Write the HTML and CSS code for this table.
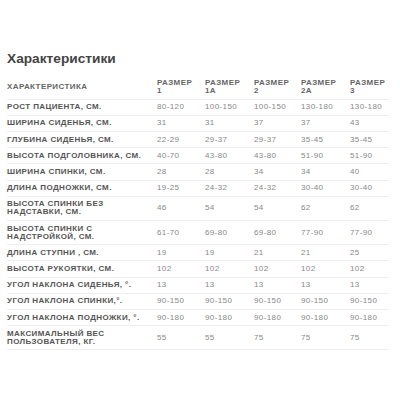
FILE: index.html
```html
<!DOCTYPE html>
<html lang="ru">
<head>
<meta charset="utf-8">
<link rel="stylesheet" href="styles.css">
</head>
<body>
<div class="page">
  <h2 class="title">Характеристики</h2>
  <table class="specs">
    <colgroup>
      <col class="c-name"><col class="c-1"><col class="c-2"><col class="c-3"><col class="c-4"><col class="c-5">
    </colgroup>
    <thead>
      <tr><th>Характеристика</th><th>Размер<br>1</th><th>Размер<br>1А</th><th>Размер<br>2</th><th>Размер<br>2А</th><th>Размер<br>3</th></tr>
    </thead>
    <tbody>
      <tr><th>Рост пациента, см.</th><td>80-120</td><td>100-150</td><td>100-150</td><td>130-180</td><td>130-180</td></tr>
      <tr><th>Ширина сиденья, см.</th><td>31</td><td>31</td><td>37</td><td>37</td><td>43</td></tr>
      <tr><th>Глубина сиденья, см.</th><td>22-29</td><td>29-37</td><td>29-37</td><td>35-45</td><td>35-45</td></tr>
      <tr><th>Высота подголовника, см.</th><td>40-70</td><td>43-80</td><td>43-80</td><td>51-90</td><td>51-90</td></tr>
      <tr><th>Ширина спинки, см.</th><td>28</td><td>28</td><td>34</td><td>34</td><td>40</td></tr>
      <tr><th>Длина подножки, см.</th><td>19-25</td><td>24-32</td><td>24-32</td><td>30-40</td><td>30-40</td></tr>
      <tr><th>Высота спинки без<br>надставки, см.</th><td>46</td><td>54</td><td>54</td><td>62</td><td>62</td></tr>
      <tr><th>Высота спинки с<br>надстройкой, см.</th><td>61-70</td><td>69-80</td><td>69-80</td><td>77-90</td><td>77-90</td></tr>
      <tr><th>Длина ступни , см.</th><td>19</td><td>19</td><td>21</td><td>21</td><td>25</td></tr>
      <tr><th>Высота рукоятки, см.</th><td>102</td><td>102</td><td>102</td><td>102</td><td>102</td></tr>
      <tr><th>Угол наклона сиденья, °.</th><td>13</td><td>13</td><td>13</td><td>13</td><td>13</td></tr>
      <tr><th>Угол наклона спинки,°.</th><td>90-150</td><td>90-150</td><td>90-150</td><td>90-150</td><td>90-150</td></tr>
      <tr><th>Угол наклона подножки, °.</th><td>90-180</td><td>90-180</td><td>90-180</td><td>90-180</td><td>90-180</td></tr>
      <tr><th>Максимальный вес<br>пользователя, кг.</th><td>55</td><td>55</td><td>75</td><td>75</td><td>75</td></tr>
    </tbody>
  </table>
</div>
</body>
</html>
```

FILE: styles.css
```css
html, body {
  margin: 0;
  padding: 0;
  background: #ffffff;
}

.page {
  padding: 50px 0 0 7px;
  font-family: "Liberation Sans", Arial, sans-serif;
}

.title {
  margin: 0 0 7.5px 0;
  font-size: 13.7px;
  line-height: 18px;
  font-weight: bold;
  color: #444444;
  letter-spacing: 0;
}

.specs {
  border-collapse: collapse;
  table-layout: fixed;
  width: 382px;
  font-size: 8px;
  line-height: 8px;
  letter-spacing: 0.4px;
}

.c-name { width: 150px; }
.c-1 { width: 48px; }
.c-2 { width: 49px; }
.c-3 { width: 47px; }
.c-4 { width: 49px; }
.c-5 { width: 39px; }

.specs th,
.specs td {
  padding: 3.6px 0;
  text-align: left;
  vertical-align: middle;
  border-bottom: 1px solid #eeeeee;
  white-space: nowrap;
}

.specs th {
  font-weight: bold;
  text-transform: uppercase;
  color: #555555;
}

.specs td {
  color: #888888;
}

.specs thead th {
  color: #666666;
}
```
